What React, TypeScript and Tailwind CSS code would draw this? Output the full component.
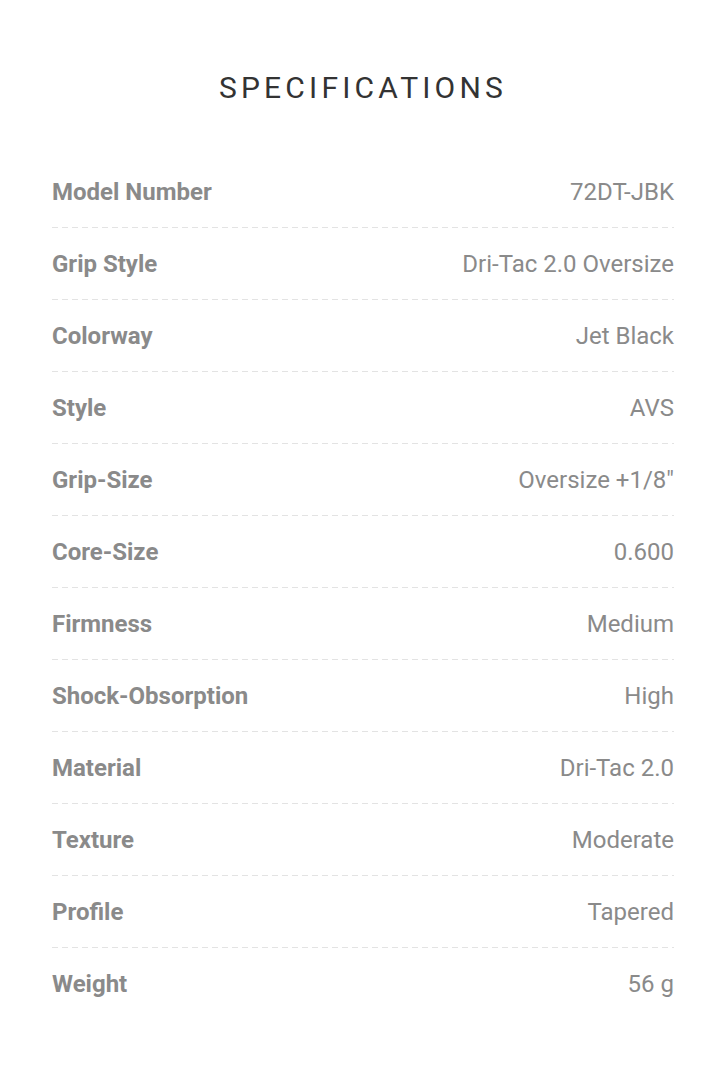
import React from "react";

const specs: [string, string][] = [
  ["Model Number", "72DT-JBK"],
  ["Grip Style", "Dri-Tac 2.0 Oversize"],
  ["Colorway", "Jet Black"],
  ["Style", "AVS"],
  ["Grip-Size", "Oversize +1/8\u2033"],
  ["Core-Size", "0.600"],
  ["Firmness", "Medium"],
  ["Shock-Obsorption", "High"],
  ["Material", "Dri-Tac 2.0"],
  ["Texture", "Moderate"],
  ["Profile", "Tapered"],
  ["Weight", "56 g"],
];

export default function App() {
  return (
    <div className="min-h-[1068px] w-full bg-white font-['Roboto',sans-serif]">
      <div className="pt-[70px] pb-[48px] pl-[52px] pr-[48px]">
        <h2 className="text-center text-[30px] leading-[36px] tracking-[0.14em] text-[#333333] font-normal">
          SPECIFICATIONS
        </h2>
        <div className="mt-[50px] flex flex-col">
          {specs.map(([label, value], i) => (
            <div key={label} className="flex flex-col">
              <div className="flex h-[71px] items-center justify-between">
                <span className="text-[24px] font-bold text-[#8a8a8a]">{label}</span>
                <span className="text-[24px] font-normal text-[#8a8a8a]">{value}</span>
              </div>
              {i < specs.length - 1 && (
                <div className="h-px w-full bg-[repeating-linear-gradient(to_right,#e3e3e3_0px,#e3e3e3_6px,transparent_6px,transparent_10px)]" />
              )}
            </div>
          ))}
        </div>
      </div>
    </div>
  );
}
